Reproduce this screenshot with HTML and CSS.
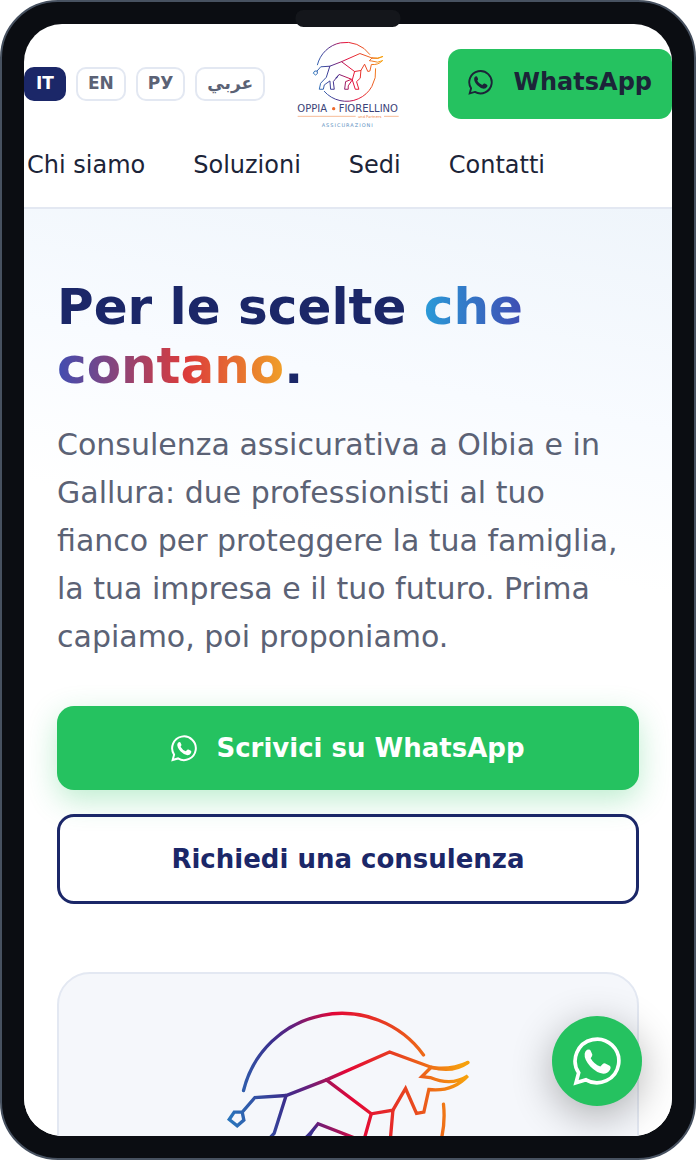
FILE: index.html
```html
<!DOCTYPE html>
<html lang="it">
<head>
<meta charset="utf-8">
<meta name="viewport" content="width=device-width, initial-scale=1">
<title>Oppia Fiorellino Assicurazioni</title>
<link rel="stylesheet" href="styles.css">
</head>
<body>
<svg class="sprite" width="0" height="0" aria-hidden="true">
  <defs>
    <linearGradient id="spectrum" gradientUnits="userSpaceOnUse" x1="90" y1="500" x2="790" y2="350">
      <stop offset="0" stop-color="#2a74bb"/>
      <stop offset=".24" stop-color="#3a2f8d"/>
      <stop offset=".34" stop-color="#62207f"/>
      <stop offset=".52" stop-color="#e30636"/>
      <stop offset=".75" stop-color="#e8441f"/>
      <stop offset="1" stop-color="#f6a00d"/>
    </linearGradient>
    <symbol id="bull" viewBox="-80 150 1040 630">
      <g fill="none" stroke="url(#spectrum)" stroke-width="10" stroke-linecap="round" stroke-linejoin="miter">
        <path d="M126 392A304 304 0 0 1 667 285"/>
        <path d="M727 433A304 304 0 0 1 197 667"/>
        <path d="M122 457L98 457L83 479L107 498L127 481L122 457L160 413L254 407L375 360L565 276L690 322Q755 340 800 308"/>
        <path d="M690 322L662 350L687 353Q752 380 800 348Q755 397 683 389L668 457L646 461L613 386L575 451L510 462L375 360"/>
        <path d="M690 323Q750 331 800 308"/>
        <path d="M254 407L218 521L159 583L145 645L187 645L197 600L255 559L262 645L300 645L290 566L350 492L479 542L417 566L407 645L444 645L444 610L486 548L510 462"/>
        <path d="M575 451L568 531L530 566L554 645L517 645L486 548"/>
      </g>
      <path d="M350 492L308 532L328 532Z" fill="#3a2f8d"/>
    </symbol>
    <symbol id="whatsapp" viewBox="0 0 144 146">
      <path d="M17 107A65.500 65.500 0 1 1 39 128L9 137Z" fill="none" stroke="currentColor" stroke-width="11"/>
      <path d="M42 38Q51 35 53 41L58 52Q59 55 53 63Q63 81 82 88L90 80Q93 77 97 79L110 86Q115 89 111 98Q104 110 91 110Q72 108 52 88Q33 67 35 50Q36 42 42 38Z" fill="currentColor"/>
    </symbol>
  </defs>
</svg>

<div class="device">
  <div class="notch"></div>
  <div class="screen">
    <header class="header">
      <div class="topbar">
        <div class="langs">
          <button class="lang lang-active" type="button">IT</button>
          <button class="lang" type="button">EN</button>
          <button class="lang" type="button" lang="ru">РУ</button>
          <button class="lang" type="button" lang="ar">عربي</button>
        </div>
        <a class="brand" href="#" aria-label="Oppia Fiorellino Assicurazioni">
          <svg class="brand-logo" viewBox="51 120 309 264" aria-hidden="true">
            <use href="#bull" x="52" y="124" width="303" height="183"/>
            <text class="brand-name" x="52" y="336">OPPIA</text>
            <circle cx="161" cy="326" r="5" fill="#ee6a2c"/>
            <text class="brand-name" x="176" y="336">FIORELLINO</text>
            <path d="M53 349H227M312 349H356" stroke="#f19a63" stroke-width="2"/>
            <text class="brand-partners" x="234" y="353">und Partners</text>
            <text class="brand-sub" x="125" y="382">ASSICURAZIONI</text>
          </svg>
        </a>
        <a class="chat-link" href="#">
          <svg class="chat-icon" aria-hidden="true"><use href="#whatsapp"/></svg>
          <span>WhatsApp</span>
        </a>
      </div>
      <nav class="nav">
        <a href="#">Chi siamo</a>
        <a href="#">Soluzioni</a>
        <a href="#">Sedi</a>
        <a href="#">Contatti</a>
      </nav>
    </header>
    <main class="hero">
      <h1 class="title">Per le scelte <span class="title-accent">che contano</span>.</h1>
      <p class="lead">Consulenza assicurativa a Olbia e in Gallura: due professionisti al tuo fianco per proteggere la tua famiglia, la tua impresa e il tuo futuro. Prima capiamo, poi proponiamo.</p>
      <div class="actions">
        <a class="btn btn-primary" href="#">
          <svg class="btn-icon" aria-hidden="true"><use href="#whatsapp"/></svg>
          <span>Scrivici su WhatsApp</span>
        </a>
        <a class="btn btn-outline" href="#">Richiedi una consulenza</a>
      </div>
      <div class="card">
        <svg class="card-art" viewBox="-80 150 1040 630" aria-hidden="true"><use href="#bull" x="-80" y="150" width="1040" height="630"/></svg>
      </div>
    </main>
    <a class="fab" href="#" aria-label="WhatsApp">
      <svg class="fab-icon" aria-hidden="true"><use href="#whatsapp"/></svg>
    </a>
  </div>
</div>
</body>
</html>
```

FILE: styles.css
```css
* {
  box-sizing: border-box;
}

body {
  margin: 0;
  background: #fff;
  font-family: "DejaVu Sans", sans-serif;
  color: #1c2438;
}

a {
  color: inherit;
  text-decoration: none;
}

.sprite {
  position: absolute;
}

.device {
  position: relative;
  height: 100vh;
  padding: 22px;
  border: 2px solid #475160;
  border-radius: 58px;
  background: #0b0d12;
}

.notch {
  position: absolute;
  z-index: 2;
  top: 8px;
  left: 50%;
  width: 105px;
  height: 17px;
  border-radius: 8px;
  background: #14161b;
  transform: translateX(-50%);
}

.screen {
  position: relative;
  height: 100%;
  overflow: hidden;
  border-radius: 38px;
  background: #fff;
}

.header {
  padding: 16px 0 27px;
  border-bottom: 2px solid #e3e8f2;
}

.topbar {
  display: flex;
  align-items: center;
}

.langs {
  display: flex;
  gap: 10px;
}

.lang {
  padding: 5px 10px 6px;
  border: 2px solid #e3e8f2;
  border-radius: 10px;
  background: #fff;
  color: #5b6275;
  font: bold 17px/19px "DejaVu Sans", sans-serif;
}

.lang-active {
  border-color: #1b2768;
  background: #1b2768;
  color: #fff;
}

.brand {
  margin-left: 32px;
}

.brand-logo {
  display: block;
  width: 103px;
  height: 88px;
}

.brand-name {
  fill: #3b4478;
  font-size: 30px;
}

.brand-partners {
  fill: #f08a50;
  font-size: 11px;
}

.brand-sub {
  fill: #5b8fc0;
  font-size: 15px;
  letter-spacing: 3px;
}

.chat-link {
  display: flex;
  align-items: center;
  gap: 21px;
  margin-left: auto;
  padding: 20px 20px 24px;
  border-radius: 13px;
  background: #25c260;
  font-size: 24px;
  font-weight: bold;
  line-height: 26px;
}

.chat-icon {
  width: 25px;
  height: 25px;
}

.nav {
  display: flex;
  gap: 48px;
  margin-top: 22px;
  padding-left: 3px;
  font-size: 24px;
  line-height: 30px;
}

.hero {
  padding: 69px 33px;
  background: linear-gradient(190deg, #eff5fb, #f8fbff 220px, #fff 380px);
}

.title {
  margin: 0;
  color: #1b2768;
  font-size: 50px;
  line-height: 59px;
}

.title-accent {
  background: linear-gradient(90deg, #2a9bd8, #3f4db3 30%, #dc3b3b 70%, #f0a028);
  background-clip: text;
  -webkit-background-clip: text;
  color: transparent;
}

.lead {
  margin: 25px 0 45px;
  color: #5b6275;
  font-size: 30px;
  line-height: 48px;
}

.actions {
  display: flex;
  flex-direction: column;
  gap: 24px;
}

.btn {
  display: flex;
  align-items: center;
  justify-content: center;
  gap: 19px;
  padding: 26px;
  border-radius: 17px;
  font-size: 26px;
  font-weight: bold;
  line-height: 32px;
}

.btn-primary {
  background: #25c260;
  box-shadow: 0 10px 30px rgba(37, 194, 96, 0.3);
  color: #fff;
}

.btn-icon {
  width: 26px;
  height: 27px;
}

.btn-outline {
  border: 3px solid #1b2768;
  color: #1b2768;
}

.card {
  margin-top: 68px;
  padding: 36px;
  border: 2px solid #e3e8f2;
  border-radius: 33px;
  background: #f5f7fb;
}

.card-art {
  display: block;
  width: 346px;
  max-width: 100%;
  margin: 0 auto;
}

.fab {
  position: absolute;
  right: 30px;
  bottom: 30px;
  display: grid;
  place-items: center;
  width: 90px;
  height: 90px;
  border-radius: 50%;
  background: #25c260;
  box-shadow: 0 10px 40px rgba(0, 0, 0, 0.3);
  color: #fff;
}

.fab-icon {
  width: 48px;
  height: 49px;
}
```
